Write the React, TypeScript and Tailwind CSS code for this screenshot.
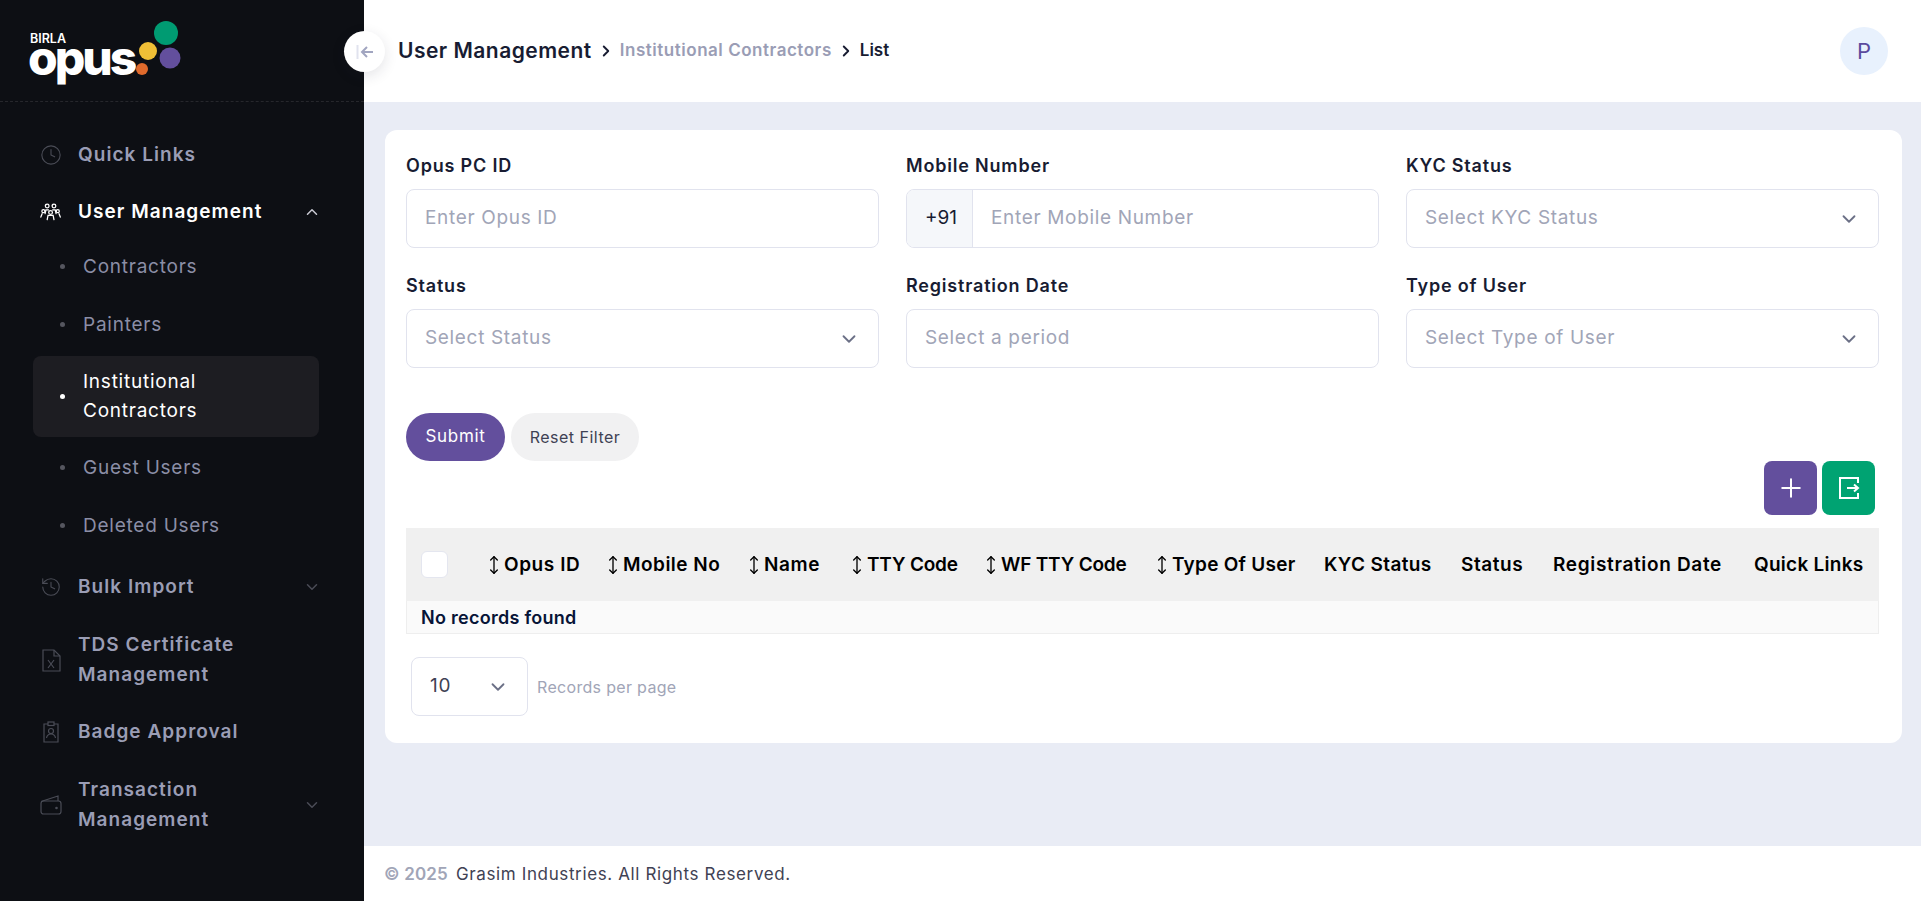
import { ChevronDown, ChevronRight, ChevronUp, Clock, History, MoveVertical, Plus } from "lucide-react";
import type { ReactNode } from "react";

const FONT = "font-['Inter','Liberation_Sans',sans-serif]";

const UsersIcon = () => (
  <svg width="26" height="22" viewBox="0 0 26 22" fill="none" stroke="currentColor" strokeWidth="1.5" strokeLinecap="round">
    <circle cx="8.5" cy="4" r="2.2" />
    <circle cx="16.5" cy="4" r="2.2" />
    <circle cx="12.5" cy="11.5" r="2.2" />
    <circle cx="4" cy="10" r="1.8" />
    <circle cx="21" cy="10" r="1.8" />
    <path d="M1 17l1.5-4M24 17l-1.5-4M6 13l1-4.5h3M19 13l-1-4.5h-3M8.5 20l1-5h6l1 5" />
  </svg>
);

const FileXIcon = () => (
  <svg width="19" height="23" viewBox="0 0 19 23" fill="none" stroke="currentColor" strokeWidth="1.2">
    <path d="M1 1h11l6 6v15H1z" />
    <path d="M12 1v6h6M6 11l6 8M12 11l-6 8" />
  </svg>
);

const BadgeIcon = () => (
  <svg width="16" height="22" viewBox="0 0 16 22" fill="none" stroke="currentColor" strokeWidth="1.2">
    <path d="M5 3H1v18h14V3h-4" />
    <rect x="5" y="1" width="6" height="3.5" />
    <circle cx="8" cy="10" r="2.5" />
    <path d="M3.5 17c.5-3 2-4 4.500-4s4 1 4.500 4" />
  </svg>
);

const WalletIcon = () => (
  <svg width="22" height="20" viewBox="0 0 22 20" fill="none" stroke="currentColor" strokeWidth="1.2">
    <path d="M1 6.500 18 1v5" />
    <rect x="1" y="6" width="20" height="13" rx="2.500" />
    <circle cx="16.500" cy="13" r=".7" fill="currentColor" />
  </svg>
);

const ExportIcon = () => (
  <svg width="22" height="24" viewBox="0 0 22 24" fill="none" stroke="currentColor" strokeWidth="2">
    <path d="M20 7V2H2v20h18v-5" />
    <path d="M9 12h11M16 8.500l4 3.500-4 3.500" />
  </svg>
);

const CollapseIcon = () => (
  <svg width="18" height="16" viewBox="0 0 18 16" fill="none" strokeWidth="2">
    <path d="M1.500 1v14" stroke="#e1e3ee" />
    <path d="M17 8H6M11 3 6 8l5 5" stroke="#a1a5c0" />
  </svg>
);

const Logo = () => (
  <svg width="180" height="72" viewBox="0 0 180 72">
    <text x="10" y="28" fill="#fff" fontFamily="Inter" fontWeight="600" fontSize="12.500">BIRLA</text>
    <text x="8" y="60" fill="#fff" fontFamily="Inter" fontWeight="800" fontSize="48" letterSpacing="-3">opus</text>
    <circle cx="146" cy="18" r="12" fill="#009b72" />
    <circle cx="128" cy="36" r="9" fill="#f0bf36" />
    <circle cx="150" cy="43" r="10.500" fill="#634f9d" />
    <circle cx="122" cy="54" r="6" fill="#e06a2c" />
  </svg>
);

const NavItem = ({ icon, label, chevron, active, className }: { icon: ReactNode; label: ReactNode; chevron?: "up" | "down"; active?: boolean; className: string }) => (
  <div className={`flex items-center pl-[40px] pr-[43px] ${className}`}>
    <span className={`flex w-[22px] justify-center ${active ? "text-white" : "text-[#4a4c56]"}`}>{icon}</span>
    <span className={`ml-4 flex-1 text-[19px] leading-[30px] font-semibold tracking-[0.055em] ${active ? "text-white" : "text-[#9a9db5]"}`}>{label}</span>
    {chevron === "up" && <ChevronUp size={18} className="text-[#c9cad3]" />}
    {chevron === "down" && <ChevronDown size={18} className="text-[#4a4c56]" />}
  </div>
);

const SubItem = ({ label, active, className }: { label: ReactNode; active?: boolean; className: string }) => (
  <div className={`ml-[33px] mr-[45px] flex items-center rounded-lg pl-[27px] ${active ? "bg-[#1d1d22]" : ""} ${className}`}>
    <span className={`size-[5px] rounded-full ${active ? "bg-white" : "bg-[#55565f]"}`} />
    <span className={`ml-[18px] text-[19px] leading-[29px] tracking-[0.04em] ${active ? "-mt-[1px] text-white" : "text-[#8b8ea6]"}`}>{label}</span>
  </div>
);

const Sidebar = () => (
  <aside className="flex w-[364px] shrink-0 flex-col bg-[#0d0f14]">
    <div className="h-[102px] border-b border-dashed border-[#26272c] pl-5 pt-[15px]">
      <Logo />
    </div>
    <nav className="flex flex-col pt-[38px]">
      <NavItem className="h-[30px]" icon={<Clock size={22} strokeWidth={1.2} />} label="Quick Links" />
      <NavItem className="mt-[27px] h-[30px]" active chevron="up" icon={<UsersIcon />} label="User Management" />
      <SubItem className="mt-[25px] h-[29px]" label="Contractors" />
      <SubItem className="mt-[29px] h-[29px]" label="Painters" />
      <SubItem className="mt-[17px] h-[81px]" active label={<>Institutional<br />Contractors</>} />
      <SubItem className="mt-[16px] h-[29px]" label="Guest Users" />
      <SubItem className="mt-[29px] h-[29px]" label="Deleted Users" />
      <NavItem className="mt-[32px] h-[30px]" chevron="down" icon={<History size={22} strokeWidth={1.2} />} label="Bulk Import" />
      <NavItem className="mt-[28px] h-[60px]" icon={<FileXIcon />} label={<>TDS Certificate<br />Management</>} />
      <NavItem className="mt-[27px] h-[30px]" icon={<BadgeIcon />} label="Badge Approval" />
      <NavItem className="mt-[28px] h-[60px]" chevron="down" icon={<WalletIcon />} label={<>Transaction<br />Management</>} />
    </nav>
  </aside>
);

const Field = ({ label, children }: { label: string; children: ReactNode }) => (
  <div>
    <div className="mb-[11px] text-[18px] leading-[25px] font-semibold tracking-[0.045em] text-[#181c32]">{label}</div>
    {children}
  </div>
);

const box = "flex h-[59px] items-center rounded-lg border border-[#e1e3ee] bg-white text-[19px] tracking-[0.035em]";

const TextBox = ({ text }: { text: string }) => <div className={`${box} pl-[18px] text-[#a1a5b7]`}>{text}</div>;

const SelectBox = ({ text }: { text: string }) => (
  <div className={`${box} justify-between pl-[18px] pr-[18px] text-[#a1a5b7]`}>
    <span>{text}</span>
    <ChevronDown size={22} className="text-[#6b7086]" />
  </div>
);

const columns: { label: string; sort?: boolean; width: string; tracking: string }[] = [
  { label: "Opus ID", sort: true, width: "w-[119px]", tracking: "tracking-[0.03em]" },
  { label: "Mobile No", sort: true, width: "w-[141px]", tracking: "tracking-[0.025em]" },
  { label: "Name", sort: true, width: "w-[103px]", tracking: "tracking-[0.03em]" },
  { label: "TTY Code", sort: true, width: "w-[134px]", tracking: "tracking-[-0.01em]" },
  { label: "WF TTY Code", sort: true, width: "w-[171px]", tracking: "tracking-[-0.01em]" },
  { label: "Type Of User", sort: true, width: "w-[172px]", tracking: "tracking-[0.014em]" },
  { label: "KYC Status", width: "w-[137px]", tracking: "tracking-[0.02em]" },
  { label: "Status", width: "w-[92px]", tracking: "tracking-[0.03em]" },
  { label: "Registration Date", width: "w-[201px]", tracking: "tracking-[0.035em]" },
  { label: "Quick Links", width: "w-[124px]", tracking: "tracking-[0.014em]" },
];

const Table = () => (
  <div className="mt-[13px]">
    <div className="flex h-[73px] items-center bg-[#f0f0f0] pl-[15px]">
      <span className="size-[27px] rounded-md border border-[#e4e6ef] bg-white" />
      <div className="ml-[36px] flex pt-[1px]">
        {columns.map((c) => (
          <div key={c.label} className={`flex items-center ${c.width} ${c.tracking} text-[19px] font-semibold whitespace-nowrap text-black`}>
            {c.sort && <MoveVertical size={20} strokeWidth={1.6} className="shrink-0" />}
            {c.label}
          </div>
        ))}
      </div>
    </div>
    <div className="flex h-[33px] items-center border border-t-0 border-[#eeeeee] bg-[#fafafa] pl-[14px] text-[18px] font-semibold tracking-[0.015em] text-[#071437]">
      No records found
    </div>
  </div>
);

export default function App() {
  return (
    <div className={`flex h-[901px] w-full overflow-hidden ${FONT}`}>
      <Sidebar />
      <div className="relative flex min-w-0 flex-1 flex-col bg-[#e9ecf5]">
        <header className="flex h-[102px] shrink-0 items-center bg-white pl-[34px] pr-[33px]">
          <span className="text-[21px] font-semibold tracking-[0.023em] text-[#181c32]">User Management</span>
          <ChevronRight size={18} strokeWidth={2.5} className="mx-[5px] text-[#181c32]" />
          <span className="text-[17px] font-semibold tracking-[0.031em] text-[#9a9db5]">Institutional Contractors</span>
          <ChevronRight size={18} strokeWidth={2.5} className="mx-[5px] text-[#181c32]" />
          <span className="text-[17px] font-semibold text-[#181c32]">List</span>
          <span className="ml-auto flex size-12 items-center justify-center rounded-full bg-[#e8f1fd] text-[22px] text-[#5b4a9e]">P</span>
        </header>
        <button className="absolute -left-[20px] top-[31px] flex size-[41px] items-center justify-center rounded-full bg-white shadow-[0_4px_14px_rgba(30,30,60,0.12)]">
          <CollapseIcon />
        </button>
        <main className="flex-1 pl-[21px] pr-[19px] pt-7">
          <div className="h-[613px] rounded-xl bg-white pl-[21px] pr-[23px] pt-[23px]">
            <div className="grid grid-cols-3 gap-x-[27px] gap-y-[25px]">
              <Field label="Opus PC ID"><TextBox text="Enter Opus ID" /></Field>
              <Field label="Mobile Number">
                <div className={`${box} overflow-hidden text-[#a1a5b7]`}>
                  <span className="flex h-full w-[66px] items-center justify-center border-r border-[#e1e3ee] bg-[#f5f7fa] pl-[3px] tracking-normal text-[#181c32]">+91</span>
                  <span className="pl-[18px]">Enter Mobile Number</span>
                </div>
              </Field>
              <Field label="KYC Status"><SelectBox text="Select KYC Status" /></Field>
              <Field label="Status"><SelectBox text="Select Status" /></Field>
              <Field label="Registration Date"><TextBox text="Select a period" /></Field>
              <Field label="Type of User"><SelectBox text="Select Type of User" /></Field>
            </div>
            <div className="mt-[45px] flex gap-[6px]">
              <button className="h-12 w-[99px] rounded-full bg-[#634f9d] text-[17px] tracking-[0.04em] text-white">Submit</button>
              <button className="h-12 w-[128px] rounded-full bg-[#f1f1f2] text-[16px] tracking-[0.03em] text-[#3f4254]">Reset Filter</button>
            </div>
            <div className="flex justify-end gap-[5px] pr-[4px]">
              <button className="flex h-[54px] w-[53px] items-center justify-center rounded-lg bg-[#634f9d] text-white"><Plus size={30} strokeWidth={1.6} /></button>
              <button className="flex h-[54px] w-[53px] items-center justify-center rounded-lg bg-[#00a372] text-white"><ExportIcon /></button>
            </div>
            <Table />
            <div className="ml-[5px] mt-[23px] flex items-center">
              <div className={`${box} w-[117px] justify-between pl-[18px] pr-[18px] text-[#3f4254]`}>
                <span>10</span>
                <ChevronDown size={22} className="text-[#6b7086]" />
              </div>
              <span className="ml-[9px] text-[16px] tracking-[0.02em] text-[#a1a5b7]">Records per page</span>
            </div>
          </div>
        </main>
        <footer className="flex h-[55px] shrink-0 items-center bg-white pl-[20px] pt-[2px] text-[17px] tracking-[0.037em] text-[#3f4254]">
          <span className="mr-2 font-semibold tracking-[0.01em] text-[#a1a5b7]">© 2025</span> Grasim Industries. All Rights Reserved.
        </footer>
      </div>
    </div>
  );
}
